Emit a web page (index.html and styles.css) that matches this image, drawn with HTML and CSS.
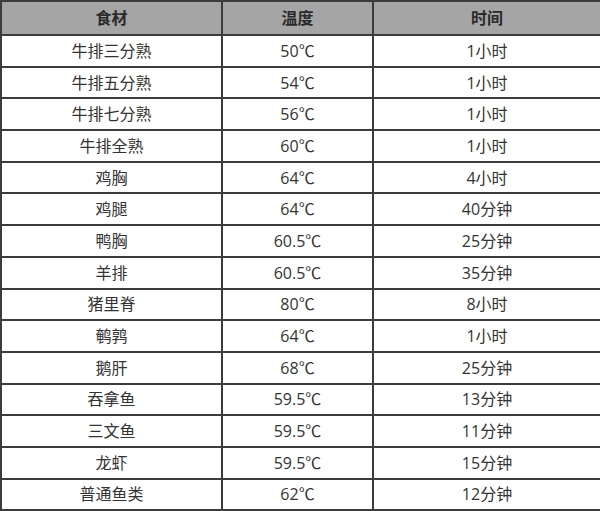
FILE: index.html
```html
<!DOCTYPE html>
<html lang="zh-CN">
<head>
<meta charset="utf-8">
<link rel="stylesheet" href="styles.css">
</head>
<body>
<table class="sv">
  <colgroup>
    <col class="c1"><col class="c2"><col class="c3">
  </colgroup>
  <thead>
    <tr><th>食材</th><th>温度</th><th>时间</th></tr>
  </thead>
  <tbody>
    <tr><td>牛排三分熟</td><td>50℃</td><td>1小时</td></tr>
    <tr><td>牛排五分熟</td><td>54℃</td><td>1小时</td></tr>
    <tr><td>牛排七分熟</td><td>56℃</td><td>1小时</td></tr>
    <tr><td>牛排全熟</td><td>60℃</td><td>1小时</td></tr>
    <tr><td>鸡胸</td><td>64℃</td><td>4小时</td></tr>
    <tr><td>鸡腿</td><td>64℃</td><td>40分钟</td></tr>
    <tr><td>鸭胸</td><td>60.5℃</td><td>25分钟</td></tr>
    <tr><td>羊排</td><td>60.5℃</td><td>35分钟</td></tr>
    <tr><td>猪里脊</td><td>80℃</td><td>8小时</td></tr>
    <tr><td>鹌鹑</td><td>64℃</td><td>1小时</td></tr>
    <tr><td>鹅肝</td><td>68℃</td><td>25分钟</td></tr>
    <tr><td>吞拿鱼</td><td>59.5℃</td><td>13分钟</td></tr>
    <tr><td>三文鱼</td><td>59.5℃</td><td>11分钟</td></tr>
    <tr><td>龙虾</td><td>59.5℃</td><td>15分钟</td></tr>
    <tr><td>普通鱼类</td><td>62℃</td><td>12分钟</td></tr>
  </tbody>
</table>
</body>
</html>
```

FILE: styles.css
```css
html, body {
  margin: 0;
  padding: 0;
  background: #ffffff;
}
.sv {
  border-collapse: collapse;
  width: 600px;
  table-layout: fixed;
  font-family: "Open Sans", "Noto Sans CJK SC", sans-serif;
  font-size: 16px;
  color: #333333;
}
.c1 { width: 221px; }
.c2 { width: 151px; }
.c3 { width: 228px; }
.sv th,
.sv td {
  border: 2px solid #3c3c3c;
  text-align: center;
  vertical-align: middle;
  padding: 0;
  line-height: 20px;
}
.sv th {
  background: #a5a5a5;
  font-weight: 700;
  height: 32px;
  color: #2a2a2a;
}
.sv td {
  height: 29.7px;
}
.sv tbody tr:first-child td {
  border-top-color: #444444;
}
```
